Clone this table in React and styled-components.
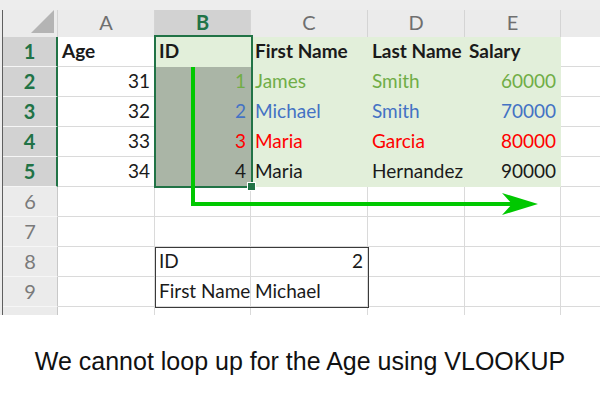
import React from "react";
import styled, { createGlobalStyle } from "styled-components";

const GlobalStyle = createGlobalStyle`
  html, body {
    margin: 0;
    padding: 0;
    background: #ffffff;
  }
  body {
    width: 600px;
    height: 400px;
    overflow: hidden;
  }
`;

const GREEN = "#217346";
const FILL = "#e2efda";
const SELECT = "#aab5a6";

const columns = [
  { key: "A", width: 97 },
  { key: "B", width: 96, active: true },
  { key: "C", width: 117 },
  { key: "D", width: 97 },
  { key: "E", width: 96 },
  { key: "F", width: 60 },
];

const rowColors = ["#70ad47", "#4472c4", "#ff0000", "#1a1a1a"];

const people = [
  { age: 31, id: 1, first: "James", last: "Smith", salary: 60000 },
  { age: 32, id: 2, first: "Michael", last: "Smith", salary: 70000 },
  { age: 33, id: 3, first: "Maria", last: "Garcia", salary: 80000 },
  { age: 34, id: 4, first: "Maria", last: "Hernandez", salary: 90000 },
];

const buildRows = () => {
  const rows = [];
  rows.push({
    n: 1,
    active: true,
    cells: [
      { text: "Age", bold: true },
      { text: "ID", bold: true, fill: FILL },
      { text: "First Name", bold: true, fill: FILL },
      { text: "Last Name", bold: true, fill: FILL },
      { text: "Salary", bold: true, fill: FILL },
      {},
    ],
  });
  people.forEach((p, i) => {
    const color = rowColors[i];
    rows.push({
      n: i + 2,
      active: true,
      cells: [
        { text: p.age, right: true },
        { text: p.id, right: true, color, fill: SELECT },
        { text: p.first, color, fill: FILL },
        { text: p.last, color, fill: FILL },
        { text: p.salary, right: true, color, fill: FILL },
        {},
      ],
    });
  });
  rows.push({ n: 6, cells: [{}, {}, {}, {}, {}, {}] });
  rows.push({ n: 7, cells: [{}, {}, {}, {}, {}, {}] });
  rows.push({ n: 8, cells: [{}, { text: "ID" }, { text: 2, right: true }, {}, {}, {}] });
  rows.push({ n: 9, cells: [{}, { text: "First Name" }, { text: "Michael" }, {}, {}, {}] });
  rows.push({ n: 10, cells: [{}, {}, {}, {}, {}, {}] });
  return rows;
};

const App = () => {
  const rows = buildRows();
  return (
    <Page>
      <GlobalStyle />
      <Frame>
        <TopStrip />
        <Sheet>
          <HeaderRow>
            <Corner>
              <svg width="24" height="24" viewBox="0 0 24 24">
                <polygon points="23,0 23,23 0,23" fill="#b4b4b4" />
              </svg>
            </Corner>
            {columns.map((c) => (
              <ColHead key={c.key} $w={c.width} $active={c.active}>
                {c.key !== "F" ? c.key : ""}
              </ColHead>
            ))}
          </HeaderRow>
          {rows.map((r) => (
            <Row key={r.n}>
              <RowHead $active={r.active}>{r.n}</RowHead>
              {r.cells.map((cell, i) => (
                <Cell
                  key={i}
                  $w={columns[i].width}
                  $fill={cell.fill}
                  $color={cell.color}
                  $bold={cell.bold}
                  $right={cell.right}
                >
                  {cell.text}
                </Cell>
              ))}
            </Row>
          ))}
          <Selection>
            <FillHandle />
          </Selection>
          <LookupBox />
          <Arrow width="600" height="315" viewBox="0 0 600 315">
            <polyline
              points="193,67 193,204 512,204"
              fill="none"
              stroke="#00c800"
              strokeWidth="4"
            />
            <polygon points="502,193 538,204 502,215 512,204" fill="#00c800" />
          </Arrow>
        </Sheet>
      </Frame>
      <Caption>We cannot loop up for the Age using VLOOKUP</Caption>
    </Page>
  );
};

const Page = styled.div`
  width: 600px;
  height: 400px;
  display: flex;
  flex-direction: column;
  background: #ffffff;
`;

const Frame = styled.div`
  height: 315px;
  overflow: hidden;
  background: #ededed;
  padding-left: 2px;
  display: flex;
  flex-direction: column;
`;

const TopStrip = styled.div`
  height: 10px;
  background: #ededed;
  flex-shrink: 0;
`;

const Sheet = styled.div`
  position: relative;
  flex: 1;
  border-left: 1px solid #5f5f5f;
  background: #ffffff;
  font-family: Lato, "Liberation Sans", sans-serif;
  font-size: 19px;
  color: #1a1a1a;
`;

const HeaderRow = styled.div`
  display: flex;
  height: 27px;
  background: #ebebeb;
`;

const Corner = styled.div`
  width: 55px;
  flex-shrink: 0;
  box-sizing: border-box;
  display: flex;
  justify-content: flex-end;
  align-items: flex-start;
  padding-right: 2px;
  border-right: 1px solid #d4d4d4;
`;

const ColHead = styled.div`
  width: ${(p) => p.$w}px;
  flex-shrink: 0;
  box-sizing: border-box;
  display: flex;
  align-items: center;
  justify-content: center;
  padding-bottom: 3px;
  border-right: 1px solid #d4d4d4;
  background: ${(p) => (p.$active ? "#d2d2d2" : "#ebebeb")};
  color: ${(p) => (p.$active ? GREEN : "#6f6f6f")};
  font-weight: ${(p) => (p.$active ? 700 : 400)};
  font-size: 20px;
`;

const Row = styled.div`
  display: flex;
  height: 30px;
`;

const RowHead = styled.div`
  width: 55px;
  flex-shrink: 0;
  box-sizing: border-box;
  display: flex;
  align-items: center;
  justify-content: center;
  padding-bottom: 2px;
  background: ${(p) => (p.$active ? "#d2d2d2" : "#ebebeb")};
  color: ${(p) => (p.$active ? GREEN : "#7a7a7a")};
  font-weight: ${(p) => (p.$active ? 700 : 400)};
  font-size: 20px;
  border-bottom: 1px solid #f6f6f6;
  border-right: ${(p) => (p.$active ? `2px solid ${GREEN}` : "1px solid #c8c8c8")};
`;

const Cell = styled.div`
  width: ${(p) => p.$w}px;
  flex-shrink: 0;
  box-sizing: border-box;
  display: flex;
  align-items: center;
  justify-content: ${(p) => (p.$right ? "flex-end" : "flex-start")};
  padding: 0 4px 3px 4px;
  white-space: nowrap;
  overflow: visible;
  background: ${(p) => p.$fill || "#ffffff"};
  color: ${(p) => p.$color || "#1a1a1a"};
  font-weight: ${(p) => (p.$bold ? 700 : 400)};
  border-right: 1px solid ${(p) => p.$fill || "#dadada"};
  border-bottom: 1px solid ${(p) => p.$fill || "#dadada"};
`;

const Selection = styled.div`
  position: absolute;
  left: 151px;
  top: 25px;
  width: 99px;
  height: 153px;
  box-sizing: border-box;
  border: 2px solid ${GREEN};
  pointer-events: none;
`;

const FillHandle = styled.div`
  position: absolute;
  right: -5px;
  bottom: -5px;
  width: 7px;
  height: 7px;
  background: ${GREEN};
  border: 1px solid #ffffff;
`;

const LookupBox = styled.div`
  position: absolute;
  left: 152px;
  top: 237px;
  width: 214px;
  height: 61px;
  box-sizing: border-box;
  border: 1.5px solid #3a3a3a;
  pointer-events: none;
`;

const Arrow = styled.svg`
  position: absolute;
  left: -3px;
  top: -10px;
  pointer-events: none;
`;

const Caption = styled.div`
  flex: 1;
  display: flex;
  align-items: center;
  justify-content: center;
  padding-top: 8px;
  font-family: "Liberation Sans", Arial, sans-serif;
  font-size: 25px;
  color: #111111;
`;

export default App;
